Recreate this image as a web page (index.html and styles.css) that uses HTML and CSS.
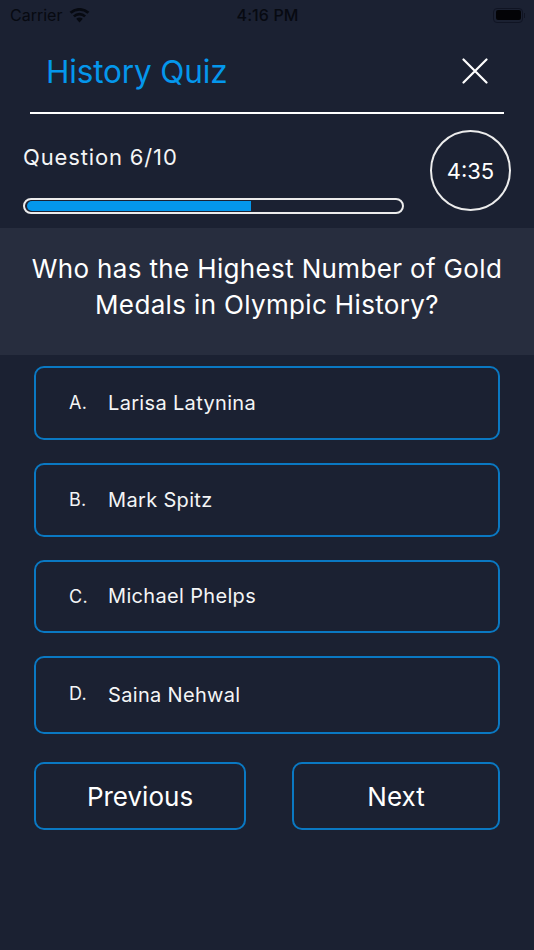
FILE: index.html
```html
<!DOCTYPE html>
<html lang="en">
<head>
<meta charset="utf-8">
<title>History Quiz</title>
<link rel="stylesheet" href="styles.css">
</head>
<body>
<div class="app">
  <div class="status">
    <div class="status-left">
      <span>Carrier</span>
      <svg class="wifi" viewBox="0 0 20 14" width="21" height="15"><path d="M10 13.6 6.9 10.2a4.6 4.6 0 0 1 6.2 0Z" fill="#05070d"/><path d="M5.5 8.7 3.8 6.9a9.2 9.2 0 0 1 12.4 0l-1.7 1.8a6.8 6.8 0 0 0-9 0Z" fill="#05070d"/><path d="M2.4 5.4.6 3.5a13.8 13.8 0 0 1 18.8 0l-1.8 1.9a11.2 11.2 0 0 0-15.2 0Z" fill="#05070d"/></svg>
    </div>
    <span class="clock">4:16 PM</span>
    <div class="status-right">
      <div class="battery"><span class="battery-fill"></span></div>
      <span class="battery-nub"></span>
    </div>
  </div>
  <header class="header">
    <h1 class="title">History Quiz</h1>
    <svg class="close" viewBox="0 0 26 26" width="26" height="26"><path d="M1.5 1.5 24.5 24.5M24.5 1.5 1.5 24.5" stroke="#fff" stroke-width="2.2" stroke-linecap="round" fill="none"/></svg>
  </header>
  <div class="rule"></div>
  <section class="progress-row">
    <div class="progress-col">
      <div class="counter">Question 6/10</div>
      <div class="track"><div class="fill"></div></div>
    </div>
    <div class="timer">4:35</div>
  </section>
  <section class="question">Who has the Highest Number of Gold Medals in Olympic History?</section>
  <div class="options">
    <div class="option"><span class="letter">A.</span><span class="answer">Larisa Latynina</span></div>
    <div class="option"><span class="letter">B.</span><span class="answer">Mark Spitz</span></div>
    <div class="option"><span class="letter">C.</span><span class="answer">Michael Phelps</span></div>
    <div class="option tall"><span class="letter up">D.</span><span class="answer">Saina Nehwal</span></div>
  </div>
  <div class="nav">
    <div class="btn prev">Previous</div>
    <div class="btn next">Next</div>
  </div>
</div>
</body>
</html>
```
FILE: styles.css
```css
* { box-sizing: border-box; }
html, body { margin: 0; padding: 0; }
body {
  width: 534px;
  height: 950px;
  overflow: hidden;
  background: #1b2132;
  color: #fff;
  font-family: "Inter", "Liberation Sans", sans-serif;
}
.app { display: flex; flex-direction: column; height: 950px; }
.status {
  height: 30px;
  padding: 0 9px 0 10px;
  display: flex;
  align-items: center;
  color: #05070d;
  font-size: 16px;
  opacity: .88;
}
.status-left { flex: 1; display: flex; align-items: center; gap: 7px; }
.status-right { flex: 1; display: flex; align-items: center; justify-content: flex-end; gap: 1px; }
.wifi { display: block; }
.clock { font-weight: 500; font-size: 16px; letter-spacing: .1px; }
.battery {
  width: 30px; height: 15px;
  border: 1px solid #0f1322;
  border-radius: 4px;
  padding: 1.5px;
}
.battery-fill { display: block; height: 100%; background: #000; border-radius: 2px; }
.battery-nub { width: 1px; height: 5px; background: #0f1322; }
.header {
  height: 82px;
  padding: 0 46px 0 46px;
  display: flex;
  align-items: center;
  justify-content: space-between;
}
.title { margin: 0; padding-top: 2px; font-size: 31.5px; font-weight: 400; color: #0497ec; line-height: 1; letter-spacing: -.15px; }
.close { display: block; margin-right: 0; }
.rule { height: 2px; margin: 0 30px; background: #fff; }
.progress-row {
  height: 114px;
  padding: 17px 23px 0 23px;
  display: flex;
  justify-content: space-between;
  align-items: flex-start;
}
.progress-col { width: 381px; padding-top: 12px; }
.counter { font-size: 22px; line-height: 28px; color: #f4f5f6; height: 55px; letter-spacing: .85px; }
.track {
  height: 16px;
  border: 2px solid #ececec;
  border-radius: 8px;
  padding: 1px 2px;
}
.fill { width: 60%; height: 100%; background: #0497ec; border-radius: 5px 0 0 5px; }
.timer {
  width: 81px; height: 81px;
  margin-top: -1px;
  border: 2px solid #ececec;
  border-radius: 50%;
  display: flex;
  align-items: center;
  justify-content: center;
  font-size: 22px;
}
.question {
  height: 127px;
  background: #272d3e;
  padding: 0 20px 10px;
  display: flex;
  align-items: center;
  text-align: center;
  justify-content: center;
  font-size: 26px;
  line-height: 36px;
  letter-spacing: .35px;
}
.options {
  display: flex;
  flex-direction: column;
  gap: 23px;
  padding: 11px 34px 0 34px;
}
.option {
  height: 73.8px;
  border: 2px solid #0a78c2;
  border-radius: 10px;
  display: flex;
  align-items: center;
  font-size: 20px;
  color: #f4f5f6;
  letter-spacing: .33px;
}
.option.tall { height: 77.5px; }
.letter { width: 72px; padding-left: 33px; text-align: left; font-size: 18px; letter-spacing: .3px; }
.up { position: relative; top: -2px; }
.nav {
  display: flex;
  justify-content: space-between;
  padding: 28px 34px 0 34px;
}
.btn {
  height: 68.5px;
  border: 2px solid #0a78c2;
  border-radius: 10px;
  display: flex;
  align-items: center;
  justify-content: center;
  font-size: 26px;
}
.prev { width: 212px; }
.next { width: 208px; }
```
